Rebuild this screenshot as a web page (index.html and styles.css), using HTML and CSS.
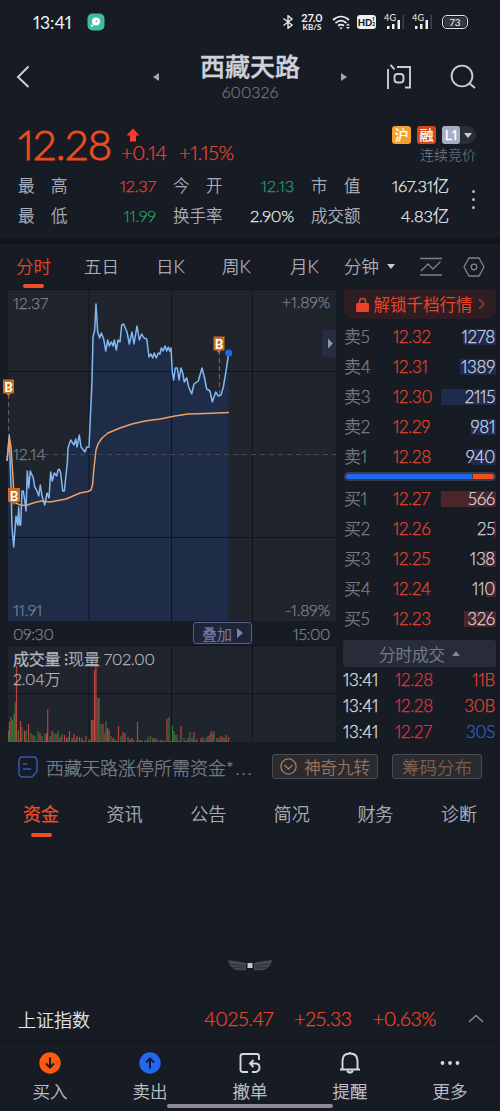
FILE: index.html
```html
<!DOCTYPE html>
<html lang="zh-CN">

<head>
    <meta charset="UTF-8">
    <meta name="viewport" content="width=device-width, initial-scale=1.0">
    <title>西藏天路 600326</title>
    <link rel="stylesheet" href="styles.css">
</head>

<body>
    <!-- 状态栏 -->
    <div class="status">
        <span class="time">13:41</span>
        <svg class="app" width="18" height="18" viewBox="0 0 18 18">
            <rect x="0.5" y="0.5" width="17" height="17" rx="5" fill="#41bda4" />
            <circle cx="9" cy="8.6" r="4" fill="#fff" />
            <circle cx="5" cy="12.6" r="1.2" fill="#fff" />
            <circle cx="9.4" cy="8.4" r="0.8" fill="#41bda4" />
        </svg>
        <svg class="bt" width="12" height="14" viewBox="0 0 12 14" fill="none" stroke="#e6e8ec" stroke-width="1.4">
            <path d="M1.500 3.500l8.500 6.500-4 3.300V.7l4 3.300-8.500 6.500" />
        </svg>
        <div class="speed"><b>27.0</b><i>KB/S</i></div>
        <svg class="wifi" width="19" height="15" viewBox="0 0 19 15" fill="none" stroke="#eceef2" stroke-width="1.7">
            <path d="M1 5c5-4.500 11-4.500 16 0M3.500 8c3.500-3 7.500-3 11 0M6 10.800c2-1.500 4-1.500 6 0" />
            <path d="M7.300 12.500h3.400L9 14.500z" fill="#eceef2" stroke="none" />
            <path d="M14 10.500l2-2 2 2zM14 12l2 2 2-2z" fill="#eceef2" stroke="none" />
        </svg>
        <div class="hd">HD<small>1<br>2</small></div>
        <div class="signal">
            <span>4G</span>
            <svg width="20" height="15" viewBox="0 0 20 15" fill="#f0f1f4">
                <path d="M2 11h2.500v3H2zM7 9h2.500v5H7zM12.500 5H15v9h-2.500z" />
                <path d="M17.500 0H19v14h-1.500z" fill="#3c4049" />
            </svg>
        </div>
        <div class="signal second">
            <span>4G</span>
            <svg width="20" height="15" viewBox="0 0 20 15" fill="#f0f1f4">
                <path d="M2 11h2.500v3H2zM7 9h2.500v5H7zM12.500 5H15v9h-2.500z" />
                <path d="M17.500 0H19v14h-1.500z" fill="#3c4049" />
            </svg>
        </div>
        <div class="battery">73</div>
    </div>

    <!-- 标题 -->
    <div class="header">
        <svg class="back" width="14" height="24" viewBox="0 0 14 24" fill="none" stroke="#c9cdd6" stroke-width="2">
            <path d="M12.500 1.500L2 12 12.500 22" />
        </svg>
        <i class="tri left"></i>
        <div class="name">
            <h1>西藏天路</h1>
            <p>600326</p>
        </div>
        <i class="tri right"></i>
        <svg class="ask" width="26" height="26" viewBox="0 0 26 26" fill="none" stroke="#c9cdd6" stroke-width="1.9">
            <path d="M2 5v20M4.500 0.800l4 4.500M11 3h13v20.500h-5" />
            <rect x="8.500" y="10" width="9" height="8.500" rx="3" />
        </svg>
        <svg class="search" width="26" height="26" viewBox="0 0 26 26" fill="none" stroke="#c9cdd6" stroke-width="1.9">
            <circle cx="12" cy="12" r="10.400" />
            <path d="M19 19l6 5" />
        </svg>
    </div>

    <!-- 报价 -->
    <div class="quote">
        <div class="top">
            <div class="price">12.28</div>
            <div class="change">
                <svg width="14" height="14" viewBox="0 0 14 14" fill="#ff3a2f">
                    <path d="M7 0.500l6.500 7H10v6H4v-6H0.500z" />
                </svg>
                <p><span>+0.14</span><span>+1.15%</span></p>
            </div>
            <div class="marks">
                <div class="tags">
                    <span class="hu">沪</span><span class="rong">融</span><span class="more"><em>L1</em><i></i></span>
                </div>
                <p>连续竞价</p>
            </div>
        </div>
        <div class="stats">
            <dl><dt>最<s></s>高</dt><dd class="red">12.37</dd></dl>
            <dl><dt>今<s></s>开</dt><dd class="green">12.13</dd></dl>
            <dl><dt>市<s></s>值</dt><dd>167.31亿</dd></dl>
            <dl><dt>最<s></s>低</dt><dd class="green">11.99</dd></dl>
            <dl><dt>换手率</dt><dd>2.90%</dd></dl>
            <dl><dt>成交额</dt><dd>4.83亿</dd></dl>
            <div class="dots"><i></i><i></i><i></i></div>
        </div>
    </div>

    <!-- 周期切换 -->
    <div class="period">
        <a class="on">分时</a>
        <a>五日</a>
        <a>日K</a>
        <a>周K</a>
        <a>月K</a>
        <a class="minute">分钟<i></i></a>
        <svg class="line" width="24" height="20" viewBox="0 0 24 20" fill="none" stroke="#7c818d" stroke-width="1.3">
            <path d="M0 1.500h22M0 18h22M1 14L8 7l5 5 7.500-7.500" />
        </svg>
        <svg class="set" width="22" height="20" viewBox="0 0 22 20" fill="none" stroke="#7c818d" stroke-width="1.300">
            <path d="M6 1h10l5 9-5 9H6l-5-9z" />
            <circle cx="11" cy="10" r="2.800" />
        </svg>
    </div>

    <div class="main">
        <div class="charts">
            <!-- 分时图 -->
            <svg class="trend" width="336" height="332" viewBox="0 289 336 332">
                <rect x="8" y="289" width="328" height="332" fill="#20242c" />
                <path fill="#1f2c47" d="M8 460L9.300 435 11 487 12 527 13.700 547 16 516 17.700 525 18.700 507 19.500 525 20.700 525 22 491 24 498 26 511 27.300 471 28.700 488 30.300 471 33.300 478 34.700 487 38.700 496 40.300 485 42 496 44.700 505 47 493 49 498 50.700 472 52.300 481 54.300 473 56.700 476 59.300 469 60.700 473 62.700 491 64.300 491 67.300 463 68 448 70.700 440 74 445 75.700 439 77 447 79.300 435 81 447 85 452 86.700 447 89 447 92 382 93 337 94.700 330 96 304 97.700 332 99.700 338 101.300 333 103.700 339 105.700 351 107.700 340 114.300 342 116.300 350 118 340 120 342 121.700 325 123.700 324 127 332 129.300 344 132 332 134 344 137 326 139.300 340 141.700 334 146.700 339 149 357 156.300 357 161.300 349 165 347 171 348 173.700 380 175.300 368 177.300 368 179 380 181 368 184.300 382 186.700 378 191.700 394 194 384 198.300 381 202 368 206.700 389 210 391 212.300 402 215.700 392 221 395 223.300 387 228.700 353V621H8z" />
                <path d="M8 289.500H336M8 371.500H336M8 537.500H336M89 289V621M171.500 289V621M252.500 289V621" stroke="#10141b" fill="none" />
                <path d="M44 454.500H336" stroke="#474c56" stroke-dasharray="5 4" fill="none" />
                <path d="M8.500 394V435M219.500 350V394" stroke="#65605e" stroke-width="1.200" stroke-dasharray="5 3" fill="none" />
                <g class="axis">
                    <text x="13" y="309">12.37</text>
                    <text x="13" y="460">12.14</text>
                    <text x="13" y="616">11.91</text>
                    <text x="330" y="308" text-anchor="end">+1.89%</text>
                    <text x="330" y="616" text-anchor="end">-1.89%</text>
                </g>
                <path class="price-line" d="M7 461L9.300 435 11 487 12 527 13.700 547 16 516 17.700 525 18.700 507 19.500 525 20.700 525 22 491 23.300 491 24.700 500 26 511 27.300 471 28.700 488 30.300 471 33.300 478 34.700 487 36.700 490 38.700 496 40.300 485 42 496 44.700 505 47 493 49 498 50.700 472 52.300 481 54.300 473 56.700 476 58 470 59.300 469 60.700 473 62.700 491 64.300 491 65.700 478 67.300 463 68 448 70.700 440 74 445 75.700 439 77 447 79.300 435 81 447 85 452 86.700 447 89 447 90.300 418 92 382 93 337 94.700 330 96 304 97.700 332 99.700 338 101.300 333 103.700 339 105.700 351 107.700 340 109.300 346 111.300 342 113 346 114.300 340 116.300 350 118 340 120 342 121.700 325 123.700 324 125.300 328 127 332 129.300 344 132 332 134 344 137 326 139.300 340 141.700 334 144 338 146.700 339 149 357 151 354 152.700 358 154.300 353 156.300 358 158.300 353 160 354 161.300 348 163 351 165 346 166.700 351 168.300 347 169.700 351 171 348 172.300 372 173.700 380 175.300 368 177.300 368 179 380 181 368 182.700 373 184.300 382 186.700 378 188.700 387 191.700 394 194 384 198.300 381 202 368 204.300 377 206.700 389 210 391 212.300 402 215.700 392 218.300 396 221 395 223.300 387 225.700 373 228.700 353" />
                <path class="avg-line" d="M7 461L9.300 438 11 447 13 478 14 497 16 503 20 505 26 505.500 33 503 41 501 50 502 66 499 80 493 88 491.500 91 490 92.500 485 94 468 96 450 98 444 102 438 108 433 120 428 132 424 145 421 160 419 175 416 188 414 205 413.500 229 412.500" />
                <circle cx="228.700" cy="353" r="3.500" fill="#2468e8" />
                <g class="buy">
                    <path d="M3 379.500h11v14h-3l-2.500 3-2.500-3H3z" />
                    <path d="M8 488h12v14h-3.500l-2.500 3-2.500-3H8z" />
                    <path d="M213.500 336.500h11v14h-3l-2.500 3-2.500-3h-3z" />
                    <text x="8.500" y="391.500">B</text>
                    <text x="14" y="500.500">B</text>
                    <text x="219" y="348.500">B</text>
                </g>
                <path d="M322 333q0-3 3-3h11v27h-11q-3 0-3-3z" fill="#272e41" />
                <path d="M328 338.500l5 5-5 5z" fill="#8e95a9" />
            </svg>
            <div class="hours">
                <span>09:30</span>
                <button>叠加<i></i></button>
                <span>15:00</span>
            </div>
            <!-- 成交量 -->
            <div class="volume">
                <svg width="336" height="97" viewBox="0 645 336 97">
                    <rect x="8" y="645" width="328" height="97" fill="#20242c" />
                    <path d="M8 645.500H336M8 693.500H336M89 645V742M171.500 645V742M252.500 645V742" stroke="#10141b" fill="none" />
                    <path class="up" d="M9.500 742V722M11 742V717M16.500 742V666M20.500 742V721M24.500 742V731M28.500 742V724M33 742V735M40 742V733M46.500 742V733M47.700 742V709M52 742V731M56 742V734M60 742V737M64.500 742V735M66.500 742V738M69.500 742V731M72 742V738M74 742V734M77 742V736M79.500 742V737M82 742V738M86 742V736M91.500 742V720M93 742V720M94.500 742V670M96 742V660M98 742V698M103 742V724M105 742V733M107.500 742V728M109 742V730M113 742V738M118.500 742V726M123 742V732M125 742V733M128 742V737M132 742V738M137.500 742V722M142 742V740M153 742V738M157 742V739M162 742V740M167 742V719M175 742V735M181 742V726M188 742V738M194 742V732M201 742V738M203 742V737M208 742V736M211 742V731M213 742V733M217 742V738M221 742V736M223 742V737M226 742V735M228.500 742V737" />
                    <path class="down" d="M8.500 742V731M12.500 742V720M14 742V714M15.300 742V702M18.500 742V730M22 742V727M26 742V730M31 742V733M35 742V736M38 742V731M42 742V736M45 742V734M50 742V736M54 742V733M58 742V731M62 742V734M68 742V737M76 742V738M89 742V739M99 742V698M101 742V724M106 742V721M111 742V736M115 742V739M121 742V736M130 742V739M134 742V740M140 742V740M145 742V740M148 742V737M150.500 742V736M155 742V738M160 742V740M169 742V717M172.500 742V726M174 742V731M177 742V735M184 742V738M190 742V732M192 742V738M197 742V739M206 742V738M210 742V735M214 742V731M219 742V738M225 742V738" />
                    <path d="M8 741.500H229" stroke="#a43c31" fill="none" stroke-dasharray="6 2" />
                </svg>
                <div class="tip"><p><b>成交量 ⁝</b>现量 702.00</p><p>2.04万</p></div>
            </div>
        </div>

        <!-- 五档盘口 -->
        <div class="book">
            <div class="unlock">
                <svg width="13" height="15" viewBox="0 0 13 15">
                    <path d="M3.500 7V4.500a3 3 0 0 1 6 0V7" fill="none" stroke="#e8452b" stroke-width="1.500" />
                    <rect y="6" width="13" height="9" rx="1.500" fill="#e8452b" />
                </svg>
                <span>解锁千档行情</span>
                <svg width="7" height="12" viewBox="0 0 7 12" fill="none" stroke="#a23b2e" stroke-width="1.500"><path d="M1 1l5 5-5 5" /></svg>
            </div>
            <ul class="sell">
                <li><span>卖5</span><em>12.32</em><b><i style="width:33px"></i>1278</b></li>
                <li><span>卖4</span><em>12.31</em><b><i style="width:36px"></i>1389</b></li>
                <li><span>卖3</span><em>12.30</em><b><i style="width:55px"></i>2115</b></li>
                <li><span>卖2</span><em>12.29</em><b><i style="width:25px"></i>981</b></li>
                <li><span>卖1</span><em>12.28</em><b><i style="width:25px"></i>940</b></li>
            </ul>
            <div class="ratio"><i></i><i></i></div>
            <ul class="bid">
                <li><span>买1</span><em>12.27</em><b><i style="width:55px"></i>566</b></li>
                <li><span>买2</span><em>12.26</em><b><i style="width:2px"></i>25</b></li>
                <li><span>买3</span><em>12.25</em><b><i style="width:13px"></i>138</b></li>
                <li><span>买4</span><em>12.24</em><b><i style="width:10px"></i>110</b></li>
                <li><span>买5</span><em>12.23</em><b><i style="width:32px"></i>326</b></li>
            </ul>
            <div class="deal-title">分时成交<i></i></div>
            <ul class="deal">
                <li><span>13:41</span><em>12.28</em><b>11B</b></li>
                <li><span>13:41</span><em>12.28</em><b>30B</b></li>
                <li><span>13:41</span><em>12.27</em><b class="s">30S</b></li>
            </ul>
        </div>
    </div>

    <!-- 提示条 -->
    <div class="notice">
        <svg width="20" height="22" viewBox="0 0 20 22" fill="none" stroke="#3559b5" stroke-width="1.500">
            <path d="M5 1h10q4 0 4 4v10.500L14 21H5q-4 0-4-4V5q0-4 4-4zM5 8h4.500M5 13h8" />
        </svg>
        <p>西藏天路涨停所需资金<span>*...</span></p>
        <a class="nine">
            <svg width="17" height="17" viewBox="0 0 17 17" fill="none" stroke="#a37a62" stroke-width="1.400">
                <circle cx="8.500" cy="8.500" r="7.600" />
                <path d="M4.500 7l4 4 4-4" />
            </svg>神奇九转</a>
        <a class="chip">筹码分布</a>
    </div>

    <div class="tabs">
        <a class="on">资金</a><a>资讯</a><a>公告</a><a>简况</a><a>财务</a><a>诊断</a>
    </div>

    <!-- 加载中 -->
    <div class="loading">
        <svg width="46" height="14" viewBox="0 0 46 14">
            <path d="M1 1q9 1 18 3v7q-8 1-12-1-3-2-4-4-2-3-2-5zM45 1q-9 1-18 3v7q8 1 12-1 3-2 4-4 2-3 2-5z" fill="#454952" />
            <path d="M4 5l14 2M6 8.500l12 .5M42 5L28 7M40 8.500L28 9" stroke="#23272f" stroke-width=".8" />
            <rect x="20.500" y="4" width="5" height="5" fill="#c6c9ce" />
        </svg>
    </div>

    <!-- 大盘指数 -->
    <div class="index">
        <span>上证指数</span>
        <b>4025.47</b><b>+25.33</b><b>+0.63%</b>
        <svg width="16" height="9" viewBox="0 0 16 9" fill="none" stroke="#858a95" stroke-width="1.400"><path d="M1 8l7-6.500L15 8" /></svg>
    </div>

    <!-- 底部导航 -->
    <div class="nav">
        <a>
            <svg width="22" height="22" viewBox="0 0 22 22" fill="none" stroke="#171b23" stroke-width="2">
                <circle cx="11" cy="11" r="10.700" fill="#ff5a10" stroke="none" />
                <path d="M11 5.500v10M7 11.500l4 4 4-4" />
            </svg>买入</a>
        <a>
            <svg width="22" height="22" viewBox="0 0 22 22" fill="none" stroke="#171b23" stroke-width="2">
                <circle cx="11" cy="11" r="10.700" fill="#2466f0" stroke="none" />
                <path d="M11 16.500v-10M7 10.500l4-4 4 4" />
            </svg>卖出</a>
        <a>
            <svg width="22" height="22" viewBox="0 0 22 22" fill="none" stroke="#d5d8df" stroke-width="1.900">
                <path d="M9 20H4q-2.500 0-2.500-2.500v-13Q1.500 2 4 2h14q2 0 2 2.500V8M14.500 8L11 11.500l3.500 3.500M11 11.500h6q3.500.5 3.500 4T17 20h-4" />
            </svg>撤单</a>
        <a>
            <svg width="22" height="22" viewBox="0 0 22 22" fill="none" stroke="#d5d8df" stroke-width="1.900">
                <path d="M1 17.500h20M3.500 17.500V9q0-7.500 7.500-7.500T18.500 9v8.500M8 19q3 3 6 0M11 0v2" />
            </svg>提醒</a>
        <a>
            <svg width="22" height="22" viewBox="0 0 22 22" fill="#d5d8df">
                <circle cx="3.500" cy="11" r="1.900" />
                <circle cx="11" cy="11" r="1.900" />
                <circle cx="18.500" cy="11" r="1.900" />
            </svg>更多</a>
        <i class="home"></i>
    </div>
</body>

</html>
```
FILE: styles.css
```css
* {
    margin: 0;
    padding: 0;
    box-sizing: border-box;
}

body {
    width: 500px;
    height: 1111px;
    overflow: hidden;
    background-color: #171b23;
    color: #b4b8c2;
    font-family: Lato, "Noto Sans CJK SC", sans-serif;
    font-variant-numeric: proportional-nums;
    font-weight: 300;
    font-size: 17px;
    -webkit-text-stroke: .25px;
}

i,
em {
    font-style: normal;
}

ul {
    list-style: none;
}

svg {
    display: block;
    flex: none;
}

/* 状态栏 */
.status {
    display: flex;
    align-items: center;
    height: 44px;
    padding-left: 33px;
    color: #f0f1f4;
    font-weight: 400;
    -webkit-text-stroke: 0;
}

.time {
    width: 54px;
    font-size: 17.5px;
}

.bt {
    margin-left: 177px;
}

.speed {
    width: 22px;
    margin-left: 7px;
    text-align: center;
    font-size: 11px;
    line-height: 10px;
}

.speed b,
.speed i {
    display: block;
}

.speed i {
    font-size: 8px;
    font-weight: 700;
    line-height: 8px;
}

.wifi {
    margin-left: 9px;
}

.hd {
    display: flex;
    align-items: center;
    justify-content: center;
    width: 19px;
    height: 14px;
    margin-left: 6px;
    border-radius: 3px;
    background-color: #f0f1f4;
    color: #171b23;
    font-size: 9.5px;
    font-weight: 900;
}

.hd small {
    font-size: 5px;
    line-height: 5px;
}

.signal {
    position: relative;
    width: 20px;
    margin-left: 9px;
}

.signal span {
    position: absolute;
    top: -1px;
    left: -1px;
    font-size: 9px;
    line-height: 8px;
}

.second {
    margin-left: 8px;
}

.battery {
    width: 26px;
    height: 14px;
    margin-left: 9px;
    border: 1.5px solid #e2e4e8;
    border-radius: 5px;
    background-color: #343841;
    background-clip: content-box;
    padding: 1px;
    font-size: 10px;
    line-height: 10px;
    text-align: center;
}

/* 标题 */
.header {
    display: flex;
    align-items: center;
    height: 75px;
    padding: 0 24px 10px 16px;
}

.tri {
    width: 0;
    border: 4px solid transparent;
}

.tri.left {
    margin-left: 123px;
    border-left-width: 0;
    border-right: 6px solid #a4a8b2;
}

.tri.right {
    border-right-width: 0;
    border-left: 6px solid #a4a8b2;
}

.name {
    width: 182px;
    text-align: center;
}

.name h1 {
    font-size: 25px;
    font-weight: 500;
    line-height: 30px;
    color: #cfd2da;
    -webkit-text-stroke: .4px;
}

.name p {
    font-size: 16px;
    line-height: 22px;
    color: #717682;
}

.ask {
    margin-left: 39px;
}

.search {
    margin-left: 38px;
}

/* 报价 */
.quote {
    height: 119px;
    padding: 0 24px 0 18px;
}

.top {
    display: flex;
    height: 52px;
}

.price {
    width: 103px;
    font-size: 42px;
    line-height: 50px;
    letter-spacing: -.7px;
    color: #f04b1e;
    -webkit-text-stroke: .9px;
}

.change {
    flex: 1;
    padding-top: 9px;
    font-size: 20px;
    line-height: 21px;
    letter-spacing: -.3px;
    color: #e8452b;
}

.change svg {
    margin-left: 5px;
}

.change span {
    display: inline-block;
    width: 58px;
}

.marks {
    padding-top: 7px;
    text-align: right;
}

.marks p {
    font-size: 14px;
    line-height: 22px;
    color: #7c808c;
    -webkit-text-stroke: 0;
}

.tags {
    display: flex;
    gap: 6px;
    height: 18px;
    border-radius: 9px;
    color: #fff;
    font-size: 14px;
    font-weight: 400;
    line-height: 18px;
    text-align: center;
}

.tags span {
    width: 19px;
    border-radius: 3px;
}

.tags .hu {
    background-color: #f4a02e;
}

.tags .rong {
    background-color: #d0491d;
}

.tags .more {
    display: flex;
    align-items: center;
    width: 34px;
    border-radius: 3px 9px 9px 3px;
    background-color: #2a2e3a;
}

.more em {
    width: 18px;
    border-radius: 3px;
    background-color: #a5aec5;
}

.more i,
.minute i,
.deal-title i,
.hours i {
    width: 0;
    border: 4px solid transparent;
    border-bottom-width: 0;
    border-top: 5px solid #c5c9d2;
}

.more i {
    margin-left: 4px;
}

.stats {
    position: relative;
    display: grid;
    grid-template-columns: 138px 138px 138px;
    grid-auto-rows: 30px;
}

.stats dl {
    display: flex;
    justify-content: space-between;
    font-size: 16.5px;
    line-height: 30px;
}

.stats dl:nth-of-type(3n+2) {
    padding-left: 17px;
}

.stats dl:nth-of-type(3n) {
    margin-left: 17px;
    margin-right: -17px;
}

.stats s {
    display: inline-block;
    width: 16.5px;
}

.stats dd {
    color: #eceef2;
    letter-spacing: -.2px;
}

.stats .red {
    color: #e8452b;
}

.stats .green {
    color: #1fa365;
}

.dots {
    position: absolute;
    top: 19px;
    right: 1px;
    display: grid;
    gap: 5px;
}

.dots i {
    width: 3px;
    height: 3px;
    border-radius: 50%;
    background-color: #b4b8c2;
}

/* 周期切换 */
.period {
    display: flex;
    align-items: center;
    height: 51px;
    padding-left: 16px;
    border-top: 6px solid #10131a;
    line-height: 34px;
}

.period a {
    position: relative;
    flex: none;
    width: 68px;
    font-size: 17.500px;
}

.period a:nth-child(3) {
    margin-left: 4px;
}

.period a:nth-child(4) {
    margin-left: -2px;
}

.period a.minute {
    display: flex;
    align-items: center;
    width: 76px;
    margin-left: -14px;
}

.minute i {
    margin-left: 8px;
}

.period .on,
.tabs .on {
    color: #ee4e28;
}

.period .on:after {
    content: "";
    position: absolute;
    left: 7px;
    bottom: -4px;
    width: 21px;
    height: 4px;
    border-radius: 2px;
    background-color: #ee4e28;
}

.set {
    margin-left: 19px;
}

/* 主体 */
.main {
    display: flex;
    height: 453px;
}

.charts {
    width: 336px;
}

.axis {
    font-size: 16px;
    letter-spacing: -.2px;
    fill: #808591;
    stroke: #808591;
    stroke-width: .25px;
}

.price-line,
.avg-line {
    fill: none;
    stroke: #84b8f3;
    stroke-width: 1.5;
    stroke-linejoin: round;
}

.avg-line {
    stroke: #eba066;
}

.buy path {
    fill: #c76d24;
}

.buy text {
    fill: #fff;
    font-size: 13px;
    font-weight: 700;
    text-anchor: middle;
}

.hours {
    display: flex;
    align-items: center;
    height: 24px;
    padding: 0 6px 0 13px;
    font-size: 16px;
    letter-spacing: -.4px;
    color: #808591;
}

.hours span {
    width: 43px;
}

.hours span:last-child {
    text-align: right;
}

.hours button {
    display: flex;
    align-items: center;
    justify-content: center;
    width: 59px;
    height: 22px;
    margin: 0 auto 0 137px;
    border: 1px solid #595e83;
    border-radius: 3px;
    background-color: #20243a;
    color: #7b81b2;
    font: 300 15px Lato, "Noto Sans CJK SC", sans-serif;
}

.hours i {
    margin-left: 5px;
    border: 5px solid transparent;
    border-right-width: 0;
    border-left: 6px solid #7b81b2;
}

.volume {
    position: relative;
}

.up,
.down {
    fill: none;
    stroke: #b94440;
    stroke-width: 1.200;
}

.down {
    stroke: #39773b;
}

.tip {
    position: absolute;
    top: 4px;
    left: 13px;
    font-size: 16px;
    line-height: 20px;
    letter-spacing: -.2px;
}

/* 五档盘口 */
.book {
    width: 152px;
    margin-left: 8px;
}

.unlock {
    display: flex;
    align-items: center;
    justify-content: center;
    gap: 5px;
    height: 30px;
    margin-bottom: 3px;
    border-radius: 4px 4px 10px 10px;
    background-color: #2e1e24;
    font-size: 16.5px;
    font-weight: 400;
    color: #e8452b;
    -webkit-text-stroke: 0;
}

.book li {
    display: grid;
    grid-template-columns: 49px 50px 1fr;
    align-items: center;
    height: 30px;
    font-size: 17px;
    line-height: 24px;
    letter-spacing: -.3px;
}

.book li span {
    color: #7c818c;
}

.book em {
    color: #e8452b;
}

.book li b {
    position: relative;
    z-index: 0;
    padding-right: 1px;
    font-weight: 300;
    text-align: right;
    color: #d4d8e0;
    line-height: 18px;
}

.book b i {
    position: absolute;
    right: 0;
    top: 1px;
    z-index: -1;
    height: 16px;
    background-color: #1f2b4d;
}

.book .bid i {
    background-color: #4c2528;
}

.ratio {
    display: flex;
    gap: 1px;
    height: 9px;
    margin-bottom: 3px;
    padding: 2px;
    border-radius: 5px;
    background-color: #343c50;
}

.ratio i {
    width: 126px;
    border-radius: 3px 0 0 3px;
    background-color: #2466ea;
}

.ratio i:last-child {
    flex: 1;
    border-radius: 0 3px 3px 0;
    background-color: #f05020;
}

.deal-title {
    display: flex;
    align-items: center;
    justify-content: center;
    height: 27px;
    margin: 6px 0 0 -1px;
    border-radius: 3px;
    background-color: #272c38;
    font-size: 16.500px;
    color: #7e8490;
}

.deal-title i {
    margin-left: 7px;
    border: 4px solid transparent;
    border-top-width: 0;
    border-bottom: 5px solid #7e8490;
}

.book .deal li {
    height: 26px;
    margin-left: -1px;
    grid-template-columns: 52px 50px 1fr;
}

.book .deal span {
    color: #e0e2e8;
}

.book .deal em {
    color: #e53343;
}

.book .deal b {
    color: #e8452b;
}

.book .deal .s {
    color: #3661cf;
}

/* 提示条 */
.notice {
    display: flex;
    align-items: center;
    height: 49px;
    padding: 0 18px;
}

.notice p {
    width: 227px;
    padding-left: 8px;
    font-size: 18px;
    white-space: nowrap;
    color: #7c818c;
}

.notice p span {
    letter-spacing: 1.8px;
}

.notice a {
    display: flex;
    align-items: center;
    justify-content: center;
    gap: 7px;
    width: 106px;
    height: 25px;
    margin-left: 7px;
    border: 1px solid #4a4a51;
    border-radius: 3px;
    background-color: #2a2a2f;
    font-size: 16.500px;
    color: #a37a62;
}

.notice .chip {
    width: 90px;
    margin-left: 14px;
    font-size: 17.500px;
    color: #85644f;
}

.tabs {
    display: flex;
    justify-content: space-between;
    height: 47px;
    padding: 0 23px;
    font-size: 18px;
    line-height: 47px;
}

.tabs a {
    position: relative;
}

.tabs .on {
    font-weight: 400;
}

.tabs .on:after {
    content: "";
    position: absolute;
    left: 8px;
    bottom: 1px;
    width: 21px;
    height: 4px;
    border-radius: 2px;
    background-color: #ee4e28;
}

.loading {
    display: flex;
    justify-content: center;
    height: 157px;
    padding-top: 121px;
}

/* 大盘指数 */
.index {
    display: flex;
    align-items: center;
    height: 47px;
    padding: 0 16px 0 18px;
    border-top: 1px solid #11151c;
    border-bottom: 1px solid #11151c;
    color: #eceef2;
    font-size: 18px;
}

.index span {
    width: 186px;
}

.index b {
    font-size: 19.5px;
    font-weight: 300;
    letter-spacing: -.35px;
    color: #ee4527;
    margin-right: 21px;
}

.index svg {
    margin-left: auto;
}

/* 底部导航 */
.nav {
    position: relative;
    display: flex;
    height: 69px;
    padding-top: 10px;
}

.nav a {
    display: flex;
    flex-direction: column;
    align-items: center;
    width: 100px;
    font-size: 17.500px;
    line-height: 36px;
    color: #c9ccd4;
}

.home {
    position: absolute;
    bottom: 3px;
    left: 167px;
    width: 166px;
    height: 4px;
    border-radius: 2px;
    background-color: #8b8d92;
}
```
